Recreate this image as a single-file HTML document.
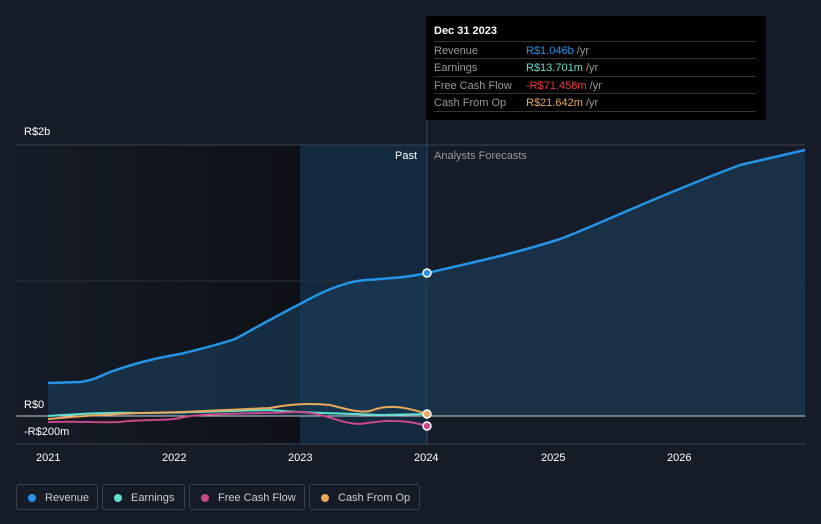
<!DOCTYPE html>
<html><head><style>
body{margin:0;width:821px;height:524px;background:#151b27;font-family:"Liberation Sans",sans-serif;overflow:hidden;position:relative}
.t{position:absolute;font-size:11px;color:#fff}
.tip{position:absolute;left:426px;top:16px;width:340px;height:104px;background:#000}
.tip .r{position:absolute;left:8px;width:322px;border-top:1px solid #333;font-size:11px;color:#999;padding-top:3px}
.tip .v{position:absolute;left:92px}
.leg{position:absolute;top:484px;height:26px;border:1px solid #3a404c;border-radius:3px;color:#ccc;font-size:11px;line-height:26px;box-sizing:border-box}
.leg i{position:absolute;left:11px;top:9px;width:8px;height:8px;border-radius:50%}
</style></head><body>
<svg width="821" height="524" style="position:absolute;left:0;top:0">
<defs>
<linearGradient id="pg" x1="0" x2="1"><stop offset="0" stop-color="#151b27"/><stop offset="1" stop-color="#0d1117"/></linearGradient>
</defs>
<rect x="16" y="145" width="284" height="299" fill="url(#pg)"/>
<rect x="300" y="145" width="127" height="299" fill="#13293d"/>
<line x1="16" y1="145" x2="805" y2="145" stroke="#3a404c"/>
<line x1="16" y1="281" x2="805" y2="281" stroke="#2a303c"/>
<line x1="16" y1="444" x2="805" y2="444" stroke="#3a404c"/>
<line x1="427" y1="120" x2="427" y2="444" stroke="#2a4a66"/>
<path d="M48,383 L80,382 C95,380 100,376 110,372 C130,365 150,359 180,354 C205,348 220,344 235,339 C250,331 265,322 300,304 C325,290 345,282 365,280 C395,278 410,277 427,273 C480,261 520,252 560,239 C600,224 650,199 740,165 L805,150 L805,416 L48,416 Z" fill="#1a3a55" opacity="0.7"/>
<path d="M48,383 L80,382 C95,380 100,376 110,372 C130,365 150,359 180,354 C205,348 220,344 235,339 C250,331 265,322 300,304 C325,290 345,282 365,280 C395,278 410,277 427,273 C480,261 520,252 560,239 C600,224 650,199 740,165 L805,150" fill="none" stroke="#2394e6" stroke-width="2.5"/>
<line x1="16" y1="416" x2="805" y2="416" stroke="#ccc"/>
<path d="M48,416 C80,414 110,412 140,413 C180,413 230,411 270,410 C300,413 340,413 380,415 L427,414" fill="none" stroke="#5fe0cf" stroke-width="2"/>
<path d="M48,422 C80,421 100,423 120,422 C140,419 170,421 180,418 C200,413 240,414 300,412 C330,414 340,424 360,424 C380,421 400,418 427,426" fill="none" stroke="#c84785" stroke-width="2"/>
<path d="M48,419 C80,416 110,414 140,413 C180,413 220,410 270,408 C290,404 310,403 330,405 C350,410 360,413 370,411 C385,405 400,405 427,414" fill="none" stroke="#e8a95a" stroke-width="2"/>
<circle cx="427" cy="273" r="4" fill="#2394e6" stroke="#fff" stroke-width="1.5"/>
<circle cx="427" cy="414" r="4" fill="#e8a95a" stroke="#fff" stroke-width="1.5"/>
<circle cx="427" cy="426" r="4" fill="#c84785" stroke="#fff" stroke-width="1.5"/>
</svg>
<div class="t" style="left:24px;top:126px">R$2b</div>
<div class="t" style="left:24px;top:399px">R$0</div>
<div class="t" style="left:24px;top:426px">-R$200m</div>
<div class="t" style="left:395px;top:150px;color:#fff">Past</div>
<div class="t" style="left:434px;top:150px;color:#999">Analysts Forecasts</div>
<div class="t" style="left:36px;top:452px">2021</div>
<div class="t" style="left:162px;top:452px">2022</div>
<div class="t" style="left:288px;top:452px">2023</div>
<div class="t" style="left:414px;top:452px">2024</div>
<div class="t" style="left:541px;top:452px">2025</div>
<div class="t" style="left:667px;top:452px">2026</div>
<div class="tip">
<div style="position:absolute;left:8px;top:9px;color:#fff;font-size:11px;font-weight:bold">Dec 31 2023</div>
<div class="r" style="top:25px">Revenue<span class="v" style="color:#2394e6">R$1.046b <span style="color:#999">/yr</span></span></div>
<div class="r" style="top:42px">Earnings<span class="v" style="color:#5fe0cf">R$13.701m <span style="color:#999">/yr</span></span></div>
<div class="r" style="top:60px">Free Cash Flow<span class="v" style="color:#ee3b3b">-R$71.458m <span style="color:#999">/yr</span></span></div>
<div class="r" style="top:77px">Cash From Op<span class="v" style="color:#e8a95a">R$21.642m <span style="color:#999">/yr</span></span></div>
<div class="r" style="top:95px"></div>
</div>
<div class="leg" style="left:16px;width:82px;padding-left:28px"><i style="background:#2394e6"></i>Revenue</div>
<div class="leg" style="left:102px;width:83px;padding-left:28px"><i style="background:#5fe0cf"></i>Earnings</div>
<div class="leg" style="left:189px;width:116px;padding-left:28px"><i style="background:#c84785"></i>Free Cash Flow</div>
<div class="leg" style="left:309px;width:111px;padding-left:28px"><i style="background:#e8a95a"></i>Cash From Op</div>
</body></html>
